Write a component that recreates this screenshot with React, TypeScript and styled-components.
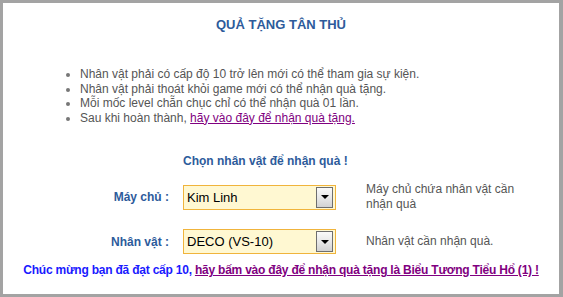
import React from "react"
import styled, { createGlobalStyle } from "styled-components"

const GlobalStyle = createGlobalStyle`
  html, body {
    margin: 0;
    padding: 0;
    background: #ffffff;
  }
  body {
    font-family: "Liberation Sans", Arial, sans-serif;
  }
`

const Frame = styled.div`
  width: 563px;
  height: 297px;
  box-sizing: border-box;
  border: 3px solid #a3a3a3;
  border-right-width: 4px;
  background: #ffffff;
  padding-top: 14px;
`

const Title = styled.h1`
  margin: 0;
  font-size: 13px;
  line-height: 16px;
  font-weight: bold;
  color: #2d5b9b;
  text-align: center;
`

const Rules = styled.ul`
  margin: 34px 0 0;
  padding-left: 77px;
  list-style: disc;
  font-size: 12px;
  line-height: 14.5px;
  color: #555555;

  li::marker {
    color: #777777;
  }
`

const RuleLink = styled.a`
  color: #800080;
  text-decoration: underline;
`

const PickTitle = styled.div`
  margin: 28px 0 0 180px;
  font-size: 12px;
  line-height: 16px;
  font-weight: bold;
  color: #2d5b9b;
`

const FormRow = styled.div<{ $top: number }>`
  display: flex;
  align-items: center;
  margin-top: ${(p) => p.$top}px;
`

const Label = styled.div`
  width: 166px;
  text-align: right;
  font-size: 12px;
  font-weight: bold;
  color: #2d5b9b;
`

const SelectBox = styled.div`
  margin-left: 14px;
  width: 153px;
  height: 25px;
  box-sizing: border-box;
  border: 1px solid #f0b43c;
  background: #fff8d2;
  display: flex;
  align-items: center;
  justify-content: space-between;
  padding: 1px 2px 1px 3px;
  font-size: 13px;
  color: #000000;
`

const DropButton = styled.div`
  width: 17px;
  height: 21px;
  box-sizing: border-box;
  border: 1px solid #6e6e6e;
  background: linear-gradient(#fafafa, #e6e6e6 55%, #d2d2d2);
  display: flex;
  align-items: center;
  justify-content: center;

  &::after {
    content: "";
    border-left: 4px solid transparent;
    border-right: 4px solid transparent;
    border-top: 4px solid #000000;
  }
`

const Hint = styled.div`
  margin-left: 30px;
  width: 170px;
  font-size: 12px;
  line-height: 15px;
  color: #555555;
`

const Footer = styled.div`
  margin-top: 8px;
  text-align: center;
  font-size: 12px;
  line-height: 16px;
  font-weight: bold;
  letter-spacing: -0.22px;
  color: #1a1aff;
`

const FooterLink = styled.a`
  color: #800080;
  text-decoration: underline;
`

const App: React.FC = () => {
  return (
    <>
      <GlobalStyle />
      <Frame>
        <Title>QUẢ TẶNG TÂN THỦ</Title>
        <Rules>
          <li>Nhân vật phải có cấp độ 10 trở lên mới có thể tham gia sự kiện.</li>
          <li>Nhân vật phải thoát khỏi game mới có thể nhận quà tặng.</li>
          <li>Mỗi mốc level chẵn chục chỉ có thể nhận quà 01 lần.</li>
          <li>
            Sau khi hoàn thành, <RuleLink href="#">hãy vào đây để nhận quà tặng.</RuleLink>
          </li>
        </Rules>
        <PickTitle>Chọn nhân vật để nhận quà !</PickTitle>
        <FormRow $top={13}>
          <Label>Máy chủ :</Label>
          <SelectBox>
            <span>Kim Linh</span>
            <DropButton />
          </SelectBox>
          <Hint>Máy chủ chứa nhân vật cần nhận quà</Hint>
        </FormRow>
        <FormRow $top={17}>
          <Label>Nhân vật :</Label>
          <SelectBox>
            <span>DECO (VS-10)</span>
            <DropButton />
          </SelectBox>
          <Hint>Nhân vật cần nhận quà.</Hint>
        </FormRow>
        <Footer>
          Chúc mừng bạn đã đạt cấp 10,{" "}
          <FooterLink href="#">hãy bấm vào đây để nhận quà tặng là Biểu Tương Tiểu Hổ (1) !</FooterLink>
        </Footer>
      </Frame>
    </>
  )
}

export default App
